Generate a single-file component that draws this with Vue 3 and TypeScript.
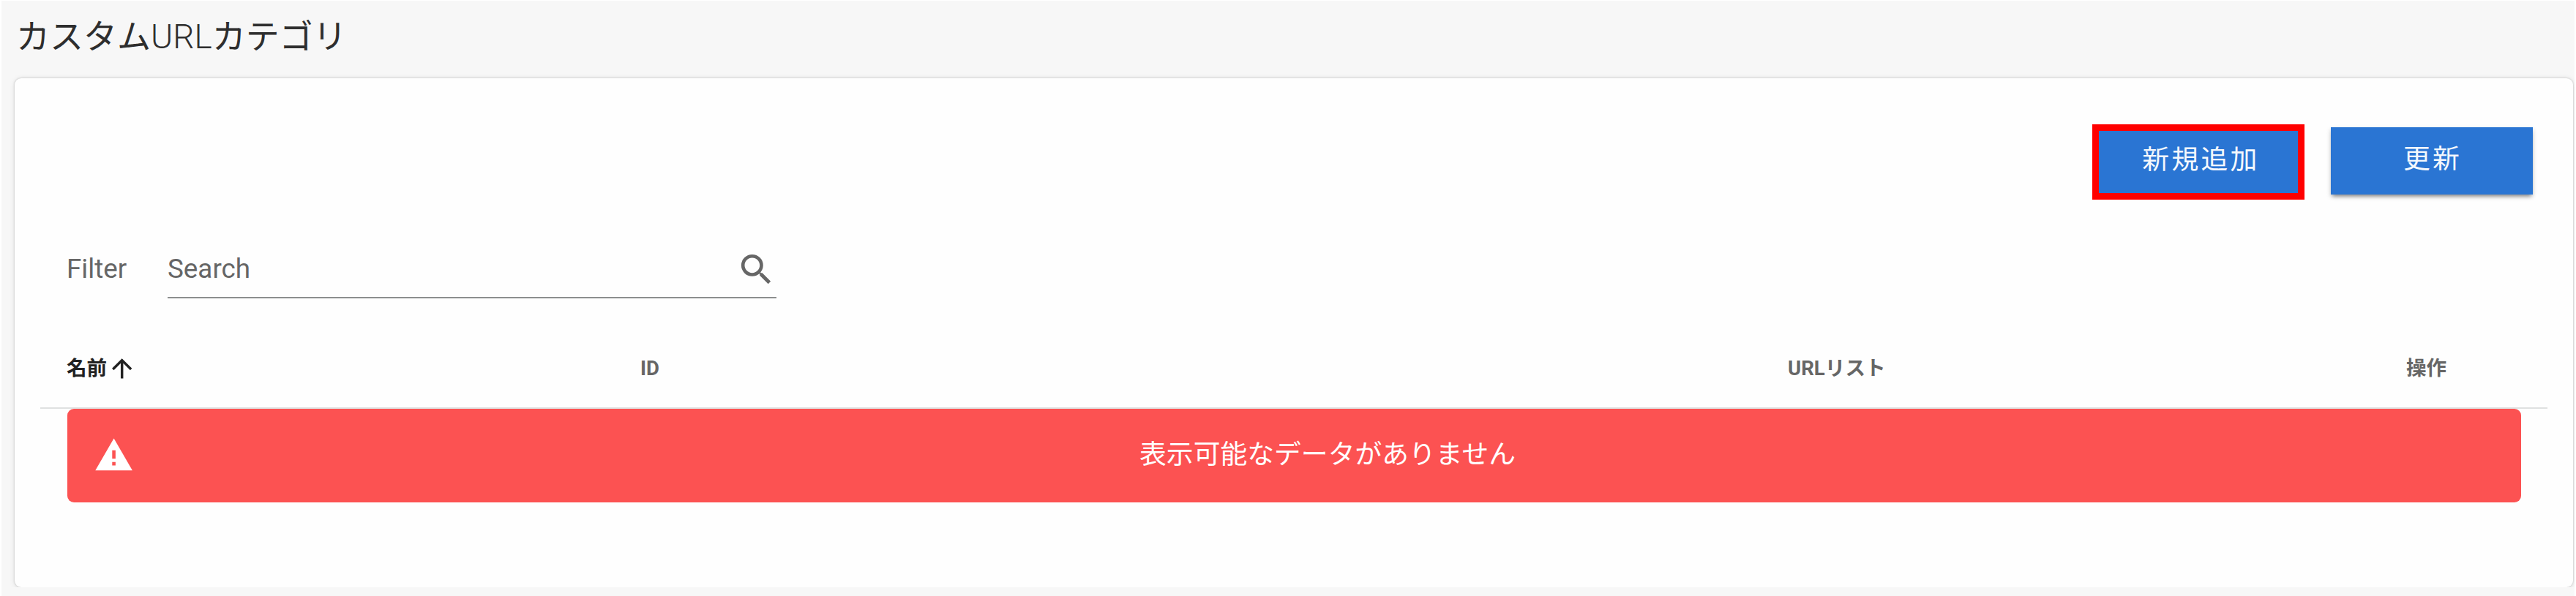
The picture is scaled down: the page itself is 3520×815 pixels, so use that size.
<script setup lang="ts">
interface Column {
  key: string
  label: string
  sorted?: boolean
}

const columns: Column[] = [
  { key: 'name', label: '名前', sorted: true },
  { key: 'id', label: 'ID' },
  { key: 'urls', label: 'URLリスト' },
  { key: 'actions', label: '操作' },
]
</script>

<template>
  <main class="page">
    <h1 class="title">カスタム<span class="latin">URL</span>カテゴリ</h1>
    <section class="card">
      <div class="toolbar">
        <div class="highlight"><button class="btn add">新規追加</button></div>
        <button class="btn raised">更新</button>
      </div>
      <div class="filter">
        <label class="filter-label" for="search">Filter</label>
        <div class="field">
          <input id="search" class="input" type="text" placeholder="Search" />
          <svg class="search-icon" viewBox="0 0 24 24">
            <path d="M9.5 3A6.5 6.5 0 0 1 16 9.5c0 1.61-.59 3.09-1.56 4.23l.27.27h.79l5 5-1.5 1.5-5-5v-.79l-.27-.27A6.516 6.516 0 0 1 9.5 16 6.5 6.5 0 0 1 3 9.5 6.5 6.5 0 0 1 9.5 3m0 2C7 5 5 7 5 9.5S7 14 9.5 14 14 12 14 9.5 12 5 9.5 5Z" />
          </svg>
        </div>
      </div>
      <div class="table-head">
        <div v-for="c in columns" :key="c.key" class="th" :class="{ sorted: c.sorted }">
          <span>{{ c.label }}</span>
          <svg v-if="c.sorted" class="arrow" viewBox="0 0 24 24">
            <path d="M13 20H11V8L5.5 13.5 4.08 12.08 12 4.16l7.92 7.92-1.42 1.42L13 8v12Z" />
          </svg>
        </div>
      </div>
      <div class="alert">
        <svg class="alert-icon" viewBox="0 0 24 24">
          <path d="M13 14H11V9H13M13 18H11V16H13M1 21H23L12 2 1 21Z" />
        </svg>
        <span class="alert-text">表示可能なデータがありません</span>
      </div>
    </section>
  </main>
</template>

<style>
body {
  margin: 0;
  background: #fff;
}
</style>

<style scoped>
.page {
  box-sizing: border-box;
  width: 3516px;
  height: 814px;
  margin: 1px 2px 0;
  padding: 0 2px 11px 18px;
  overflow: hidden;
  background: #f7f7f7;
  font-family: Roboto, "Noto Sans CJK JP", sans-serif;
  font-size: 36.8px;
  color: #666;
}
.title {
  height: 106px;
  margin: 0 0 0 2px;
  font-size: 46px;
  font-weight: 400;
  line-height: 98px;
  color: #2e2e2e;
  white-space: nowrap;
}
.latin {
  font-weight: 300;
}
.card {
  box-sizing: border-box;
  height: 696px;
  padding: 63px 35px 0;
  border-radius: 9px;
  background: #fefefe;
  box-shadow: 0 0 3px rgba(0, 0, 0, 0.22), 0 1px 9px rgba(0, 0, 0, 0.09);
  clip-path: inset(-12px -12px 0 -12px);
}
.toolbar {
  display: flex;
  justify-content: flex-end;
  align-items: flex-start;
  height: 157px;
  padding-right: 20px;
  gap: 36px;
}
.highlight {
  box-sizing: border-box;
  width: 290px;
  height: 103px;
  border: 9px solid #f00;
}
.btn {
  display: block;
  width: 100%;
  height: 100%;
  margin: 0;
  padding: 0 0 6px;
  border: 0;
  background: #2a75d3;
  color: #f4f8fd;
  font: inherit;
  line-height: 78px;
  font-weight: 400;
  letter-spacing: 3.29px;
  white-space: nowrap;
}
.add {
  padding-left: 7px;
}
.raised {
  width: 276px;
  height: 92px;
  margin-top: 4px;
  padding: 0 0 5px 2px;
  box-shadow: 0 5px 5px -3px rgba(0, 0, 0, 0.35), 0 3px 6px rgba(0, 0, 0, 0.22);
}
.filter {
  display: flex;
  height: 133px;
  padding-left: 36px;
}
.filter-label {
  width: 138px;
  padding-top: 19px;
  line-height: 43px;
}
.field {
  box-sizing: border-box;
  display: flex;
  width: 832px;
  height: 81px;
  border-bottom: 2px solid #8c8e8e;
}
.input {
  flex: 1;
  min-width: 0;
  height: 43px;
  margin-top: 19px;
  padding: 0;
  border: 0;
  outline: 0;
  background: transparent;
  font: inherit;
  color: #666;
}
.input::placeholder {
  color: #666;
  opacity: 1;
}
svg {
  display: block;
  fill: currentColor;
}
.search-icon {
  width: 55.2px;
  height: 55.2px;
  margin-top: 14px;
}
.table-head {
  box-sizing: border-box;
  display: grid;
  grid-template-columns: 784px 1568px 845px 1fr;
  height: 99px;
  padding-left: 36px;
  border-bottom: 2px solid #dfe1e1;
  font-size: 27.6px;
  font-weight: 700;
}
.th {
  display: flex;
  align-items: center;
  height: 87px;
  line-height: 40px;
}
.sorted {
  color: #212121;
}
.arrow {
  width: 41.4px;
  height: 41.4px;
}
.alert {
  display: flex;
  align-items: center;
  height: 128px;
  margin: 0 36px 0 37px;
  padding: 0 0 0 36px;
  box-sizing: border-box;
  border-radius: 9px;
  background: #fc5252;
  color: #fff;
}
.alert-icon {
  width: 55.2px;
  height: 55.2px;
}
.alert-text {
  flex: 1;
  padding-bottom: 10px;
  text-align: center;
  font-weight: 400;
}
</style>
